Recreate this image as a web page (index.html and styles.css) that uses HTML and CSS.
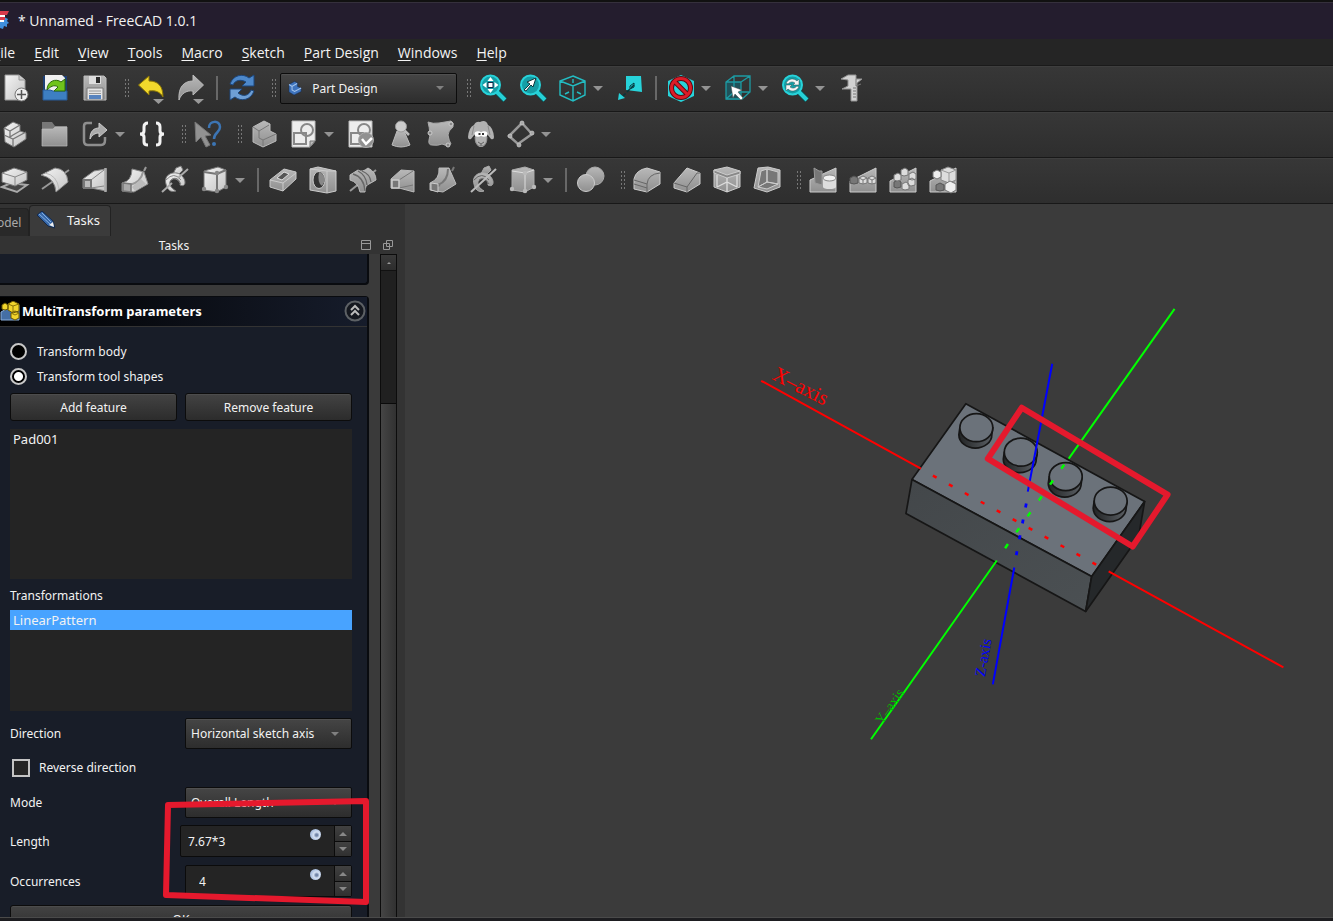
FILE: index.html
```html
<!DOCTYPE html>
<html lang="en">
<head>
<meta charset="utf-8">
<title>* Unnamed - FreeCAD 1.0.1</title>
<link rel="stylesheet" href="styles.css">
</head>
<body>
<svg class="defs" width="0" height="0" aria-hidden="true">
  <defs>
    <linearGradient id="lt" x1="0" y1="0" x2="1" y2="1"><stop offset="0" stop-color="#f4f4f4"/><stop offset="1" stop-color="#c4c4c4"/></linearGradient>
    <linearGradient id="md" x1="0" y1="0" x2="0" y2="1"><stop offset="0" stop-color="#b8b8b8"/><stop offset="1" stop-color="#8f8f8f"/></linearGradient>
    <linearGradient id="side" x1="0" y1="0" x2="1" y2="0"><stop offset="0" stop-color="#222425"/><stop offset="1" stop-color="#5c6166"/></linearGradient>
    <linearGradient id="front" x1="0" y1="0" x2="1" y2="1"><stop offset="0" stop-color="#43474a"/><stop offset="1" stop-color="#4b5053"/></linearGradient>
  </defs>
</svg>
<div class="window">
  <header class="titlebar">
    <svg class="logo" width="20" height="20" viewBox="0 0 20 20" aria-hidden="true"><path d="M4 6h10l2 1 2 1-1 2 2 2-2 1v3l-3-1-1 3-3-1-3 1v-3H4z" fill="#3f8fdd"/><path d="M2 0h17l-2 4H9v2h6v3H2z" fill="#d93a4c"/><path d="M5 4h10v2H9v3h5v2H5z" fill="#fff"/></svg>
    <span>* Unnamed - FreeCAD 1.0.1</span>
  </header>
  <nav class="menubar" aria-label="Main menu">
    <a href="#"><u>F</u>ile</a><a href="#"><u>E</u>dit</a><a href="#"><u>V</u>iew</a><a href="#"><u>T</u>ools</a><a href="#"><u>M</u>acro</a><a href="#"><u>S</u>ketch</a><a href="#"><u>P</u>art Design</a><a href="#"><u>W</u>indows</a><a href="#"><u>H</u>elp</a>
  </nav>

  <div class="toolbar" role="toolbar" aria-label="File and view">
    <button class="tool" aria-label="New"><svg viewBox="0 0 28 28"><path d="M4 1h14l6 5v20H4z" fill="url(#lt)" stroke="#999"/><path d="M18 1v5h6" fill="#ccc" stroke="#999"/><circle cx="20.500" cy="20.500" r="6.500" fill="#eee" stroke="#777"/><path d="M20.500 16v9M16 20.500h9" stroke="#555" stroke-width="1.500"/></svg></button>
    <button class="tool" aria-label="Open"><svg viewBox="0 0 28 28"><path d="M2 2h24v24H2z" fill="#1d3f75"/><path d="M4 1h17l3 3v13H4z" fill="#f1f1f1"/><path d="M2 16h7l3 1h14v9H2z" fill="#3d7fc2" stroke="#265a99"/><path d="M6 16c0-9 9-12 14-8l4-3v12H13l4-4c-4-3-8 0-11 3z" fill="#6fc31c" stroke="#2d6b0b"/></svg></button>
    <button class="tool" aria-label="Save"><svg viewBox="0 0 28 28"><path d="M3 2h20l2 2v22H3z" fill="url(#md)" stroke="#bbb"/><path d="M8 2h12v8H8z" fill="#ddd"/><path d="M15 3h4v6h-4z" fill="#2b2b2b"/><path d="M6 14h16v12H6z" fill="#e5e5e5" stroke="#777"/><path d="M8 17h12M8 19.500h12" stroke="#999"/><path d="M8 21h12v4H8z" fill="#5884bf"/></svg></button>
    <i class="grip"></i>
    <button class="tool" aria-label="Undo"><svg viewBox="0 0 28 28"><path d="M1.500 11L12 2v5c9 0 14 5 14 16-3-5-7-7-14-6v4z" fill="#f2d82c" stroke="#8d7706"/><path d="M16 25h11l-5.500 5z" fill="#999"/></svg></button>
    <button class="tool" aria-label="Redo"><svg viewBox="0 0 28 28"><path d="M26.500 11L16 1v6C7 7 1 13 2 26c2-6 7-10 14-9v4z" fill="url(#md)" stroke="#bbb"/><path d="M16 25h11l-5.500 5z" fill="#999"/></svg></button>
    <i class="sep"></i>
    <button class="tool" aria-label="Refresh"><svg viewBox="0 0 28 28"><path d="M2 10C5 1 15-1 21 4l5-3v11H14l4-4C13 5 7 6 5 11z" fill="#4d88ca" stroke="#1c477d"/><path d="M26 17c-3 9-13 11-19 6l-5 3V15h12l-4 4c5 4 11 3 13-3z" fill="#6e9fd5" stroke="#1c477d"/></svg></button>
    <i class="grip"></i>
    <span class="workbench pick">
      <svg viewBox="0 0 28 28" width="16" height="16" aria-hidden="true"><path d="M2 7l11-6 6 3v7l7 3v7l-14 7-10-6z" fill="#3f74bd" stroke="#122c56"/><path d="M2 7l6 4 10-6M8 11v7l5 3 13-7" fill="none" stroke="#a5c5ec" stroke-width="2"/></svg>
      <select aria-label="Workbench"><option>Part Design</option></select>
    </span>
    <i class="grip"></i>
    <button class="tool" aria-label="Fit all"><svg viewBox="0 0 28 28"><path d="M17 17l9 9" stroke="#074e52" stroke-width="6"/><path d="M17 17l9 9" stroke="#26d0d6" stroke-width="4"/><circle cx="11.500" cy="11" r="9.500" fill="#159ea6" stroke="#27d3da" stroke-width="2"/><path d="M11.500 3l3 4h-6zM11.500 19l3-4h-6zM3.500 11l4-3v6zM19.500 11l-4-3v6z" fill="#fff"/><path d="M9 8.500h5v5H9z" fill="#fff" stroke="#124"/></svg></button>
    <button class="tool" aria-label="Fit selection"><svg viewBox="0 0 28 28"><path d="M17 17l9 9" stroke="#074e52" stroke-width="6"/><path d="M17 17l9 9" stroke="#26d0d6" stroke-width="4"/><circle cx="11.500" cy="11" r="9.500" fill="#159ea6" stroke="#27d3da" stroke-width="2"/><path d="M5 16l6-6-3-2 9-4-3 9-2-2-5 6z" fill="#fff" stroke="#0d383c"/></svg></button>
    <button class="tool" aria-label="Isometric"><svg viewBox="0 0 28 28"><path d="M14 2l12 5v14l-12 6-13-6V7zM1 7l13 5 12-5M14 12v15M14 5v4M6 20l4-2M22 20l-4-2" fill="none" stroke="#23bdc3" stroke-width="1.400"/></svg></button>
    <i class="drop"></i>
    <button class="tool" aria-label="Align view"><svg viewBox="0 0 28 28"><path d="M10 2h15l1 16-16-2z" fill="#27d3da"/><path d="M18 11L5 24" stroke="#05353a" stroke-width="1.500" stroke-dasharray="4 2"/><path d="M2 26l1-7 6 5z" fill="#27d3da"/><path d="M14 12l4-3 0 4-4 2z" fill="none" stroke="#05353a"/></svg></button>
    <i class="sep"></i>
    <button class="tool" aria-label="Draw style"><svg viewBox="0 0 28 28"><path d="M14 1l13 6v15l-13 6L1 22V7z" fill="#27d3da"/><circle cx="14" cy="14" r="9.500" fill="none" stroke="#5b0b12" stroke-width="5"/><path d="M7.500 7.500l13 13" stroke="#5b0b12" stroke-width="5"/><circle cx="14" cy="14" r="9.500" fill="none" stroke="#dc1c28" stroke-width="3"/><path d="M7.500 7.500l13 13" stroke="#dc1c28" stroke-width="3"/></svg></button>
    <i class="drop"></i>
    <button class="tool" aria-label="Bounding box"><svg viewBox="0 0 28 28"><path d="M2 8h15v18H2z" fill="#20525a"/><path d="M2 8l8-6h16v16l-8 7H2zM2 8h15v17M17 8l9-6M10 2v16h16M10 18l-8 7" fill="none" stroke="#1d9ba3" stroke-width="1.300"/><path d="M7 12l11 4-4 2 5 6-2 2-6-6-2 4z" fill="#fff" stroke="#444" stroke-width=".5"/></svg></button>
    <i class="drop"></i>
    <button class="tool" aria-label="Sync view"><svg viewBox="0 0 28 28"><path d="M17 17l9 9" stroke="#074e52" stroke-width="6"/><path d="M17 17l9 9" stroke="#26d0d6" stroke-width="4"/><circle cx="11.500" cy="11" r="9.500" fill="#159ea6" stroke="#27d3da" stroke-width="2"/><path d="M5 9c3-5 8-5 11-2l2-2v6h-6l2-2c-3-2-5-1-7 1zM18 13c-3 5-8 5-11 2l-2 2v-6h6l-2 2c3 2 5 1 7-1z" fill="#f5f5f5" stroke="#355" stroke-width=".5"/></svg></button>
    <i class="drop"></i>
    <button class="tool" aria-label="Measure"><svg viewBox="0 0 28 28"><path d="M3 5l7-4h8v4h6l-5 4v18h-6V15H4l6-3V6z" fill="#d2d2d2" stroke="#929292"/><path d="M18 5v7l5-2M15 14h3M15 17h3M15 20h3M15 23h3" fill="none" stroke="#777"/></svg></button>
  </div>

  <div class="toolbar" role="toolbar" aria-label="Structure">
    <button class="tool" aria-label="Create part"><svg viewBox="0 0 28 28"><path d="M3 8l9-6 7 3v6l6 2v6l-12 8-9-5z" fill="url(#lt)" stroke="#777"/><path d="M3 8l6 3 10-6M9 11v6l3-2 7-4M3 15l9 4 13-7M12 19v7" fill="none" stroke="#777" stroke-width="1.300"/></svg></button>
    <button class="tool" aria-label="Create group"><svg viewBox="0 0 28 28"><path d="M1 2h10l3 4h12v20H1z" fill="#777"/><path d="M1 9h11l2-2h12v19H1z" fill="url(#md)" stroke="#bbb" stroke-width=".7"/></svg></button>
    <button class="tool" aria-label="Make link"><svg viewBox="0 0 28 28"><path d="M11 3H6Q3 3 3 6v15q0 4 4 4h13q4 0 4-5v-3" fill="none" stroke="#8e8e8e" stroke-width="2.500"/><path d="M9 19c0-8 4-11 9-11V3l8 7-8 7v-4c-4 0-7 2-9 6z" fill="#aaa" stroke="#ccc"/></svg></button>
    <i class="drop"></i>
    <button class="tool" aria-label="Variable set"><svg viewBox="0 0 28 28"><path d="M10 3Q6 3 6 7v4q0 3-4 3 4 0 4 3v5q0 3 4 3M18 3q4 0 4 4v4q0 3 4 3-4 0-4 3v5q0 3-4 3" fill="none" stroke="#f3f3f3" stroke-width="3"/></svg></button>
    <i class="grip"></i>
    <button class="tool" aria-label="What's this"><svg viewBox="0 0 28 28"><path d="M1 2l16 13-6 1 5 9-4 2-5-10-5 5z" fill="#929292" stroke="#777"/><path d="M15 8c0-8 11-8 11-1 0 6-6 5-6 12" fill="none" stroke="#3c75b4" stroke-width="2.500"/><circle cx="20" cy="24" r="2" fill="#3c75b4"/></svg></button>
    <i class="grip"></i>
    <button class="tool" aria-label="Create body"><svg viewBox="0 0 28 28"><path d="M3 7l11-6 6 3v7l6 3v7l-13 6-10-5z" fill="url(#md)" stroke="#bbb"/><path d="M3 7l6 4 10-6M9 11v7l4 2 13-6M13 20v6" fill="none" stroke="#777"/></svg></button>
    <button class="tool" aria-label="Create sketch"><svg viewBox="0 0 28 28"><path d="M2 1h23v20l-5 6H2z" fill="#ededed" stroke="#bbb"/><path d="M4 13h12v11H4z" fill="none" stroke="#888" stroke-width="2"/><circle cx="17" cy="10" r="6" fill="none" stroke="#888" stroke-width="2"/><path d="M20 27v-6h5z" fill="#bbb" stroke="#777"/></svg></button>
    <i class="drop"></i>
    <button class="tool" aria-label="Validate sketch"><svg viewBox="0 0 28 28"><path d="M2 1h23v26H2z" fill="#ededed" stroke="#bbb"/><path d="M4 13h12v11H4z" fill="none" stroke="#888" stroke-width="2"/><circle cx="17" cy="10" r="6" fill="none" stroke="#888" stroke-width="2"/><circle cx="19" cy="20" r="7.500" fill="#909090" stroke="#aaa"/><path d="M15 19l4 5 6-6" fill="none" stroke="#fff" stroke-width="2.500"/></svg></button>
    <button class="tool" aria-label="Check geometry"><svg viewBox="0 0 28 28"><path d="M10 11h7l6 14q-9 4-18 0z" fill="url(#md)" stroke="#bbb"/><path d="M17 10l5 5" stroke="#bbb" stroke-width="2.500"/><circle cx="14" cy="6.500" r="5.500" fill="#ccc" stroke="#999"/></svg></button>
    <button class="tool" aria-label="Sub-object binder"><svg viewBox="0 0 28 28"><path d="M1 2q5 2 11 1t12-2q3 1 2 6-5 4-5 8 1 6 3 9-4 3-9 0-4 2-10 1-4 0-3-5 2-6-1-18z" fill="url(#md)" stroke="#aaa"/><circle cx="24" cy="4" r="2" fill="#888" stroke="#ccc"/><circle cx="3" cy="13" r="2" fill="#888" stroke="#ccc"/><circle cx="21" cy="25" r="2" fill="#888" stroke="#ccc"/></svg></button>
    <button class="tool" aria-label="Clone"><svg viewBox="0 0 28 28"><path d="M7 5q2-4 6-3 6-3 8 3 5 2 6 12 0 3-3 2l-4-5v7q-2 6-6 6t-6-6v-7l-4 5q-3 1-3-2Q2 7 7 5z" fill="#b2b2b2"/><path d="M7 6l-2 9M21 6l2 9M8 17q0 9 6 9t6-9" fill="none" stroke="#8c8c8c"/><ellipse cx="11" cy="14" rx="3.500" ry="2.800" fill="#fff"/><ellipse cx="17" cy="14" rx="3.500" ry="2.800" fill="#fff"/><path d="M11.500 13h2v2h-2zM15 13h2v2h-2z" fill="#333"/><path d="M11 22l3 2 3-2M14 24v2" fill="none" stroke="#666"/></svg></button>
    <button class="tool" aria-label="Datum"><svg viewBox="0 0 28 28"><path d="M15 3l10 11-14 10L2 16z" fill="none" stroke="#999" stroke-width="2.500"/><g fill="#aaa" stroke="#ccc" stroke-width=".7"><circle cx="15" cy="3" r="2"/><circle cx="25" cy="13" r="2"/><circle cx="12" cy="25" r="2"/><circle cx="3" cy="16" r="2"/></g></svg></button>
    <i class="drop"></i>
  </div>

  <div class="toolbar" role="toolbar" aria-label="Modeling">
    <button class="tool" aria-label="Pad"><svg viewBox="0 0 28 28"><path d="M1 21l9-4 16 2-10 7z" fill="#444" stroke="#aaa" stroke-width="2"/><path d="M1 7l12-5 13 4v8l-12 6-13-4z" fill="url(#lt)" stroke="#777"/><path d="M1 7l13 4 12-5M14 11v9" fill="none" stroke="#888"/></svg></button>
    <button class="tool" aria-label="Revolution"><svg viewBox="0 0 28 28"><path d="M1 23L28 4" stroke="#999" stroke-width="2"/><path d="M0 9L14 2Q26 3 27 16L15 26Q14 12 0 9z" fill="url(#lt)" stroke="#888"/><path d="M4 7q12 2 14 16" fill="none" stroke="#bbb"/></svg></button>
    <button class="tool" aria-label="Additive loft"><svg viewBox="0 0 28 28"><path d="M2 13L13 5l12-2v22l-15-3H2z" fill="url(#lt)" stroke="#888"/><path d="M10 14L23 4M10 22l13-2" stroke="#888"/><path d="M24.500 2v24" stroke="#aaa" stroke-width="2.500"/><path d="M3 14h7v8H3z" fill="#bbb" stroke="#777" stroke-width="2"/></svg></button>
    <button class="tool" aria-label="Additive pipe"><svg viewBox="0 0 28 28"><path d="M11 3l12 3 4 12-14 8-12-1v-8q10-2 10-14z" fill="url(#lt)" stroke="#888"/><path d="M22 6q-2 10-13 13M25 1l-2 4" stroke="#999" stroke-width="2" fill="none"/><path d="M20 13l5 5-11 7-3-4z" fill="#bbb"/><path d="M2 17l8 1v8l-8-1z" fill="#aaa" stroke="#777" stroke-width="1.500"/></svg></button>
    <button class="tool" aria-label="Additive helix"><svg viewBox="0 0 28 28"><path d="M15 2l5-2 2 4-4 4h-6z" fill="url(#lt)" stroke="#777"/><path d="M5 18C2 8 14 4 20 9s5 13-1 10c1-5-5-9-9-5-3 4 0 8 5 11-6 2-9-2-10-7z" fill="url(#lt)" stroke="#777"/><path d="M5 14q8-9 15 0M10 14q5-4 10 4" fill="none" stroke="#888"/><path d="M1 26l10-9M17 12L27 3" stroke="#aaa" stroke-width="2"/></svg></button>
    <button class="tool" aria-label="Additive primitive"><svg viewBox="0 0 28 28"><path d="M3 5l14-4 8 3v17l-9 5-13-2z" fill="url(#lt)" stroke="#777"/><path d="M3 6l13 2 9-4M16 8v17" fill="none" stroke="#777" stroke-width="2"/><circle cx="16" cy="7" r="2.200" fill="#888"/><circle cx="3" cy="23" r="2.200" fill="#888"/><circle cx="16" cy="25" r="2.200" fill="#888"/><circle cx="25" cy="21" r="2.200" fill="#888"/></svg></button>
    <i class="drop"></i>
    <i class="sep"></i>
    <button class="tool" aria-label="Pocket"><svg viewBox="0 0 28 28"><path d="M1 14L15 3l12 3v7L14 25 1 21z" fill="url(#md)" stroke="#c8c8c8"/><path d="M1 14l13 3 13-10M14 17v8" fill="none" stroke="#ccc"/><path d="M8 12l7-6 5 2-7 6z" fill="#555" stroke="#ddd"/></svg></button>
    <button class="tool" aria-label="Hole"><svg viewBox="0 0 28 28"><path d="M1 3l8-2 18 4v20l-9 2L1 24z" fill="url(#md)" stroke="#ccc"/><path d="M18 5v22M1 3l17 2h9" stroke="#ccc" fill="none"/><ellipse cx="10" cy="14" rx="6" ry="8.500" fill="#333" stroke="#ccc"/><path d="M10 6q6 2 6 9l-3 5q-5-3-3-14" fill="#888"/></svg></button>
    <button class="tool" aria-label="Groove"><svg viewBox="0 0 28 28"><path d="M1 25L27 4" stroke="#999" stroke-width="2"/><path d="M1 9l8-5q4 3 10-2 8 4 8 12l-7 4q-4 1-4 8l-5 0Q9 16 1 14z" fill="url(#md)" stroke="#bbb"/><path d="M4 8q11 3 12 17M9 5q8 4 9 14M13 5q8 3 9 11" fill="none" stroke="#666" stroke-width="1.300"/></svg></button>
    <button class="tool" aria-label="Subtractive loft"><svg viewBox="0 0 28 28"><path d="M2 13L12 4l13 1v21l-15-4H2z" fill="url(#md)" stroke="#bbb"/><path d="M10 14L24 5M10 22l14-3" stroke="#777"/><path d="M3 14h7v8H3z" fill="#777" stroke="#ccc" stroke-width="1.500"/></svg></button>
    <button class="tool" aria-label="Subtractive pipe"><svg viewBox="0 0 28 28"><path d="M10 2h10l7 16-13 8-13-2v-7q10-4 9-15z" fill="url(#md)" stroke="#bbb"/><path d="M19 3q0 12-10 16M25 1l-2 4M2 23l9-4" fill="none" stroke="#777" stroke-width="2"/><path d="M2 17l7 1v8l-7-2z" fill="#777" stroke="#ccc"/></svg></button>
    <button class="tool" aria-label="Subtractive helix"><svg viewBox="0 0 28 28"><path d="M15 2l5-2 2 4-4 4h-6z" fill="url(#md)" stroke="#aaa"/><path d="M5 18C2 8 14 4 20 9s5 13-1 10c1-5-5-9-9-5-3 4 0 8 5 11-6 2-9-2-10-7z" fill="url(#md)" stroke="#aaa"/><path d="M5 14q8-9 15 0M10 14q5-4 10 4" fill="none" stroke="#666"/><path d="M2 26L27 3" stroke="#bbb" stroke-width="2"/></svg></button>
    <button class="tool" aria-label="Subtractive primitive"><svg viewBox="0 0 28 28"><path d="M3 4l13-3 9 3v17l-9 5-13-2z" fill="url(#md)" stroke="#aaa"/><path d="M3 5l13 2 9-3M16 7v18" fill="none" stroke="#ddd"/><circle cx="16" cy="7" r="2.200" fill="#bbb"/><circle cx="3" cy="23" r="2.200" fill="#bbb"/><circle cx="16" cy="25" r="2.200" fill="#bbb"/><circle cx="25" cy="21" r="2.200" fill="#bbb"/></svg></button>
    <i class="drop"></i>
    <i class="sep"></i>
    <button class="tool" aria-label="Boolean"><svg viewBox="0 0 28 28"><circle cx="18" cy="10" r="9" fill="url(#md)" stroke="#aaa"/><circle cx="9" cy="17" r="8.500" fill="url(#md)" stroke="#ccc"/></svg></button>
    <i class="grip"></i>
    <button class="tool" aria-label="Fillet"><svg viewBox="0 0 28 28"><path d="M1 13Q3 4 14 2l13 4v12L14 26 1 23z" fill="url(#md)" stroke="#ccc"/><path d="M1 14l13 4q1-10 13-11M14 18v8M1 18l13 4" fill="none" stroke="#666"/></svg></button>
    <button class="tool" aria-label="Chamfer"><svg viewBox="0 0 28 28"><path d="M1 17L14 2l13 5v11L14 26 1 22z" fill="url(#md)" stroke="#ccc"/><path d="M1 17l13 4L24 7h3M14 21v5" fill="none" stroke="#666"/></svg></button>
    <button class="tool" aria-label="Draft"><svg viewBox="0 0 28 28"><path d="M1 4l13-3 13 4v16l-13 5-13-5z" fill="url(#md)" stroke="#ccc"/><path d="M1 4l13 5 13-4v3l-13 4L1 7z" fill="#888" stroke="#ccc"/><path d="M14 12v14M4 9v12M24 9v12M4 21l10-5 10 5" fill="none" stroke="#ddd" stroke-width="1.300"/></svg></button>
    <button class="tool" aria-label="Thickness"><svg viewBox="0 0 28 28"><path d="M5 2l10-1 12 3v17l-13 5-13-4z" fill="url(#md)" stroke="#ccc"/><path d="M8 5l6-2v13l-9 5zM14 3l11 3v12l-11-2zM5 21l9-5 11 2-11 5z" fill="#777" stroke="#ccc"/></svg></button>
    <i class="grip"></i>
    <button class="tool" aria-label="Mirrored"><svg viewBox="0 0 28 28"><path d="M1 14L16 7l11-5v24H1z" fill="url(#md)" stroke="#ccc"/><path d="M5 2l5 3 3 0v14l-7-2z" fill="#777" stroke="#999"/><path d="M14 12h13v9H14z" fill="#ddd"/><ellipse cx="20.500" cy="12" rx="6.500" ry="3" fill="#f2f2f2" stroke="#888"/><ellipse cx="20.500" cy="21" rx="6.500" ry="2" fill="#ddd"/></svg></button>
    <button class="tool" aria-label="Linear pattern"><svg viewBox="0 0 28 28"><path d="M1 15L27 2v24H1z" fill="url(#md)" stroke="#ccc"/><path d="M1 12l4-2 4 2v5l-4 1-4-1z" fill="#777" stroke="#555"/><path d="M10 12l4-2 4 2v5l-4 1-4-1zM19 12l4-2 4 2v5l-4 1-4-1z" fill="#ddd" stroke="#777"/><path d="M10 12l4 2 4-2M14 14v4M19 12l4 2 4-2M23 14v4" fill="none" stroke="#777"/></svg></button>
    <button class="tool" aria-label="Polar pattern"><svg viewBox="0 0 28 28"><path d="M1 15L27 2v24H1z" fill="url(#md)" stroke="#ccc"/><path d="M5 16l4-2 3 2v5l-4 1-3-1z" fill="#777" stroke="#555"/><path d="M5 9l4-2 3 2v5l-4 1-3-1zM12 4l4-2 3 2v5l-4 1-3-1zM20 8l4-2 3 2v5l-4 1-3-1zM13 18l4-2 3 2v5l-4 1-3-1zM19 14l4-2 3 2v5l-4 1-3-1z" fill="#ddd" stroke="#777"/></svg></button>
    <button class="tool" aria-label="MultiTransform"><svg viewBox="0 0 28 28"><path d="M1 15L27 2v24H1z" fill="url(#md)" stroke="#ccc"/><path d="M12 4l7-3 8 3v10l-7 3-8-3z" fill="#ddd" stroke="#888"/><path d="M12 4l8 3 7-3M20 7v10" fill="none" stroke="#999"/><path d="M4 6l4-2 4 2v5l-4 2-4-2zM16 18l5-3 6 3v6l-5 3-6-3z" fill="#eee" stroke="#777"/><path d="M7 19l4-2 4 2v5l-4 1-4-1z" fill="#777" stroke="#555"/></svg></button>
  </div>

  <main class="work">
    <aside class="dock">
      <div class="tabs" role="tablist">
        <button class="tab tab-model" role="tab">Model</button>
        <button class="tab tab-active" role="tab" aria-selected="true"><svg width="18" height="18" viewBox="0 0 18 18" aria-hidden="true"><path d="M0 4l5-4 11 10 2 7-7-2z" fill="#3868a8" stroke="#142848"/><path d="M2 3l11 10M5 2l9 9" stroke="#82aee0"/><path d="M12 14l4-3 1 5z" fill="#eee"/></svg>Tasks</button>
      </div>
      <div class="dock-title">
        <h1>Tasks</h1>
        <button aria-label="Collapse"><svg width="10" height="10" viewBox="0 0 10 10"><path d="M.5.5h9v9h-9zM0 3.500h10" fill="none" stroke="#999"/></svg></button>
        <button aria-label="Float"><svg width="10" height="10" viewBox="0 0 10 10"><path d="M3.500.5h6v6h-6zM.5 3.500h6v6h-6z" fill="none" stroke="#999"/></svg></button>
      </div>
      <div class="dock-body">
        <div class="scroll-content">
          <section class="box box-end"></section>
          <section class="box">
            <header class="box-head">
              <svg width="20" height="20" viewBox="0 0 20 20" aria-hidden="true"><path d="M1 11l9-5 9-2v15H1z" fill="#456fa5" stroke="#8aaeda"/><path d="M8 3l5-3 6 3v7l-6 2-5-3zM2 4l3-2 3 2v4L5 9 2 8zM11 12l4-2 4 2v5l-4 2-4-2z" fill="#f1d52c" stroke="#6c5a05"/><path d="M8 3l5 2 6-2M13 5v6M11 12l4 2 4-2" fill="none" stroke="#8b7508"/></svg>
              <h2>MultiTransform parameters</h2>
              <button aria-label="Collapse section"><svg width="22" height="22" viewBox="0 0 22 22"><circle cx="11" cy="11" r="9.500" fill="#15181f" stroke="#5d6165" stroke-width="2"/><path d="M7 10l4-4 4 4M7 15l4-4 4 4" fill="none" stroke="#bbb" stroke-width="2"/></svg></button>
            </header>
            <form class="params" onsubmit="return false">
              <label class="radio"><input type="radio" name="target">Transform body</label>
              <label class="radio"><input type="radio" name="target" checked>Transform tool shapes</label>
              <div class="pair"><button class="push" type="button">Add feature</button><button class="push" type="button">Remove feature</button></div>
              <ul class="list list-features"><li>Pad001</li></ul>
              <h3>Transformations</h3>
              <ul class="list list-transforms"><li class="selected">LinearPattern</li></ul>
              <div class="field"><label for="dir">Direction</label><span class="pick"><select id="dir"><option>Horizontal sketch axis</option></select></span></div>
              <label class="check"><input type="checkbox">Reverse direction</label>
              <div class="field"><label for="mode">Mode</label><span class="pick"><select id="mode"><option>Overall Length</option></select></span></div>
              <div class="field field-spin"><label for="len">Length</label><span class="spin spin-wide"><input id="len" type="text" value="7.67*3"><i class="fx"></i><span class="steps"><button type="button" aria-label="Increase length"></button><button type="button" aria-label="Decrease length"></button></span></span></div>
              <div class="field field-spin"><label for="occ">Occurrences</label><span class="spin spin-count"><input id="occ" type="text" value="4"><i class="fx"></i><span class="steps"><button type="button" aria-label="Increase occurrences"></button><button type="button" aria-label="Decrease occurrences"></button></span></span></div>
              <button class="push" type="button">OK</button>
            </form>
            <svg class="mark" width="210" height="112" viewBox="0 0 210 112" aria-hidden="true"><path d="M6 8L204 4v101L4 98z" fill="none" stroke="#e5192d" stroke-width="6" stroke-linejoin="round"/></svg>
          </section>
        </div>
        <div class="scrollbar" aria-hidden="true"><span class="scroll-up"></span><span class="scroll-track"></span><span class="scroll-thumb"></span></div>
      </div>
    </aside>

    <section class="viewport" aria-label="3D view">
      <svg viewBox="405 204 928 714" preserveAspectRatio="xMidYMid meet">
        <g stroke="#161616" stroke-width="1.700" stroke-linejoin="round">
          <path d="M966 404L1145 502 1092 577 912 480z" fill="#6b727a"/>
          <path d="M912 480L1092 577 1086 612 906 514z" fill="url(#front)"/>
          <path d="M1145 502L1092 577 1086 612 1139 537z" fill="#25282a"/>
          <g id="studs">
            <path d="M960 428l-1 7a16.500 13.500 0 0 0 33 0l1-7z" fill="url(#side)"/><ellipse cx="976.500" cy="428" rx="16.500" ry="14" fill="#6b727a"/>
            <path d="M1004.500 452.500l-1 7a16.500 13.500 0 0 0 33 0l1-7z" fill="url(#side)"/><ellipse cx="1021" cy="452.500" rx="16.500" ry="14" fill="#6b727a"/>
            <path d="M1049.500 477l-1 7a16.500 13.500 0 0 0 33 0l1-7z" fill="url(#side)"/><ellipse cx="1066" cy="477" rx="16.500" ry="14" fill="#6b727a"/>
            <path d="M1094.500 501.500l-1 7a16.500 13.500 0 0 0 33 0l1-7z" fill="url(#side)"/><ellipse cx="1111" cy="501.500" rx="16.500" ry="14" fill="#6b727a"/>
          </g>
        </g>
        <g fill="none" stroke-width="2">
          <path d="M761 381L921 469M1109 572L1284 668" stroke="#f00"/>
          <path d="M933 476L1098 566" stroke="#f00" stroke-width="2.500" stroke-dasharray="4.200 14"/>
          <path d="M1175 309L1069 459M997 561L871 740" stroke="#0f0"/>
          <path d="M1064.500 465L1005 549" stroke="#0f0" stroke-width="2.500" stroke-dasharray="5 14.500"/>
          <path d="M1052.500 364L1028 492M1014.500 568L993 685" stroke="#00f"/>
          <path d="M1026.500 504L1016 558" stroke="#00f" stroke-width="2.800" stroke-dasharray="4 12.200"/>
        </g>
        <g class="axis-names">
          <text fill="#f00" font-size="21" transform="translate(771 379) rotate(27)">X–axis</text>
          <text fill="#00f" font-size="15" transform="translate(985 678) rotate(-80)">Z-axis</text>
          <text fill="#0b0" font-size="14" transform="translate(882 726) rotate(-55)">Y–axis</text>
        </g>
        <path d="M1022 408L1168 495 1133 547 988 459z" fill="none" stroke="#e5192d" stroke-width="6" stroke-linejoin="round"/>
      </svg>
    </section>
  </main>
  <footer class="status"></footer>
</div>
</body>
</html>
```
FILE: styles.css
```css
*, *::before, *::after { box-sizing: border-box; }
html, body { height: 100%; margin: 0; }
body { background: #333; color: #f2f2f2; font: 12px/16px "Noto Sans", sans-serif; overflow: hidden; }
button, input, select { font: inherit; color: inherit; margin: 0; padding: 0; border: 0; background: none; border-radius: 0; }
h1, h2, h3, ul { margin: 0; padding: 0; font: inherit; list-style: none; }
svg { display: block; }
.defs { position: absolute; }
.window { display: flex; flex-direction: column; height: 100vh; overflow: hidden; }

.titlebar { flex: none; height: 39px; display: flex; align-items: center; gap: 8px; background: #241d2e; border-top: 2px solid #111; box-shadow: inset 0 1px #35303c; font: 14px/20px "Open Sans", sans-serif; white-space: pre; }
.logo { margin-left: -10px; }
.menubar { flex: none; height: 27px; display: flex; align-items: center; gap: 19px; padding: 2px 0 0; background: #252525; border-bottom: 1px solid #1a1a1a; font: 14px/20px "Open Sans", sans-serif; }
.menubar a { color: #f4f4f4; text-decoration: none; }
.menubar a:first-child { margin-left: -7px; }
.menubar u { text-underline-offset: 2px; }

.toolbar { flex: none; height: 46px; padding: 0 0 2px; display: flex; align-items: center; background: linear-gradient(#373737, #2e2e2e); border-bottom: 1px solid #181818; border-top: 1px solid #3e3e3e; }
.tool { flex: none; width: 40px; height: 40px; display: grid; place-items: center; }
.tool:first-child { margin-left: -5px; }
.tool svg { width: 28px; height: 28px; overflow: visible; fill: none; }
.drop { flex: none; width: 17px; }
.drop::before { content: ""; display: block; width: 10px; border: 5px solid transparent; border-top-color: #939393; border-bottom: 0; }
.sep { flex: none; width: 11px; height: 24px; padding-left: 5px; }
.sep::before { content: ""; display: block; width: 2px; height: 24px; background: #686868; }
.grip { flex: none; width: 16px; padding-left: 9px; }
.grip::before { content: ""; display: block; width: 6px; height: 20px; background: radial-gradient(circle, #777 0 1px, transparent 1px) 0 0 / 3px 4px; }

.pick { position: relative; display: flex; align-items: center; height: 31px; border: 1px solid #0c0c0c; border-radius: 2px; background: linear-gradient(#454545, #2d2d2d); box-shadow: inset 0 1px #505050; }
.pick select { appearance: none; width: 100%; height: 100%; padding: 0 5px; outline: 0; }
.pick::after { content: ""; position: absolute; right: 12px; border: 4px solid transparent; border-top-color: #808080; border-bottom: 0; pointer-events: none; }
.workbench { width: 177px; margin: 0 0 0 2px; padding-left: 7px; gap: 4px; }
.workbench select { padding: 2px 6px 0; }

.work { flex: 1; min-height: 0; display: flex; }
.dock { flex: none; width: 405px; display: flex; flex-direction: column; background: #333; }
.tabs { height: 32px; display: flex; align-items: flex-end; padding-top: 1px; }
.tab { border: 1px solid #222; border-bottom: 0; border-radius: 4px 4px 0 0; }
.tab-model { width: 44px; height: 28px; margin-left: -15px; background: #292929; color: #aaa; text-align: right; padding-right: 7px; }
.tab-active { width: 82px; height: 31px; display: flex; align-items: center; gap: 12px; padding: 0 0 2px 7px; background: #3b3b3b; font-size: 13px; }
.dock-title { height: 18px; padding: 0 12px 0 0; display: flex; align-items: center; gap: 12px; }
.dock-title h1 { flex: 1; text-align: center; padding: 2px 1px 0 0; }
.dock-body { flex: 1; min-height: 0; display: flex; justify-content: space-between; padding-right: 8px; }
.scroll-content { flex: none; width: 380px; overflow: hidden; background: #3a3a3a; padding-right: 11px; }
.box { position: relative; border: solid #090b0f; border-width: 1px 2px 1px 0; border-radius: 0 4px 4px 0; background: #181d28; }
.box-end { height: 31px; border-top: 0; border-radius: 0 0 4px 0; margin-bottom: 11px; border-bottom-width: 2px; }
.box-head { height: 30px; display: flex; align-items: center; gap: 2px; padding: 0 1px 2px 0; background: linear-gradient(90deg, #000, #161c2b); border-bottom: 1px solid #333; }
.box-head h2 { flex: 1; font-size: 13px; font-weight: 700; color: #fff; }
.params { display: flex; flex-direction: column; padding: 12px 15px 12px 10px; }
.radio, .check { display: flex; align-items: center; gap: 10px; height: 25px; }
.radio input { appearance: none; width: 17px; height: 17px; border: 2px solid #c8c8c8; border-radius: 50%; background: #000; }
.radio input:checked { background: radial-gradient(circle, #fff 0 4px, #000 5px); }
.pair { display: grid; grid-template-columns: 1fr 1fr; gap: 8px; margin: 4px 0 8px; }
.push { height: 28px; padding-top: 2px; border: 1px solid #0c0c0c; border-radius: 3px; background: linear-gradient(#434343, #2c2c2c); box-shadow: inset 0 1px #4c4c4c; }
.list { background: #242424; font-size: 13px; line-height: 20px; }
.list li { padding: 0 3px; }
.list-features { height: 150px; margin-bottom: 9px; }
.list-transforms { height: 101px; margin-bottom: 7px; }
.params h3 { margin-bottom: 6px; }
.selected { background: #48a3ff; }
.field { display: grid; grid-template-columns: minmax(0, 1fr) minmax(0, 1fr); column-gap: 8px; align-items: center; }
.check { height: 38px; gap: 9px; padding-left: 2px; }
.check input { appearance: none; width: 18px; height: 18px; border: 2px solid #c4c4c4; background: #252525; }
.field-spin { margin: 7px 0 1px; }
.field-spin label { padding-top: 2px; }
.spin { position: relative; display: flex; height: 32px; border: 1px solid #0b0b0b; border-radius: 2px; background: #242424; }
.spin input { flex: 1; min-width: 0; padding: 2px 0 0 7px; outline: 0; }
.spin-wide { margin-left: -5px; }
.spin.spin-count input { padding-left: 13px; }
.fx { position: absolute; right: 30px; top: 3px; width: 11px; height: 11px; border-radius: 50%; background: radial-gradient(circle at 60% 55%, #7185a8 0 1px, #d5e1f3 3px, #a9bede 6px); }
.steps { width: 17px; display: grid; grid-template-rows: 1fr 1fr; border-left: 1px solid #0b0b0b; }
.steps button { display: grid; place-items: center; background: linear-gradient(#414141, #303030); }
.steps button + button { border-top: 1px solid #0b0b0b; }
.steps button::before { content: ""; border: 4px solid transparent; border-bottom-color: #888; border-top: 0; }
.steps button + button::before { border-top: 4px solid #888; border-bottom: 0; }
.params > .push { margin-top: 7px; }
.mark { position: absolute; left: 162px; top: 500px; overflow: visible; }

.scrollbar { width: 17px; display: flex; flex-direction: column; border: solid #0c0c0c; border-width: 1px 1px 0; }
.scroll-up { height: 16px; display: grid; place-items: center; background: linear-gradient(#393939, #2d2d2d); border-bottom: 1px solid #111; }
.scroll-up::before { content: ""; border: 2px solid transparent; border-bottom-color: #999; border-top: 0; }
.scroll-track { height: 133px; background: #202020; border-bottom: 1px solid #0a0a0a; }
.scroll-thumb { flex: 1; background: linear-gradient(90deg, #454545, #313131); }
.viewport { flex: 1; min-width: 0; background: #3b3b3b; }
.viewport svg { width: 100%; height: 100%; }
.axis-names { font-family: "Liberation Serif", serif; }
.status { flex: none; height: 4px; background: #1d1d20; border-top: 1px solid #4a4a4a; }
```
